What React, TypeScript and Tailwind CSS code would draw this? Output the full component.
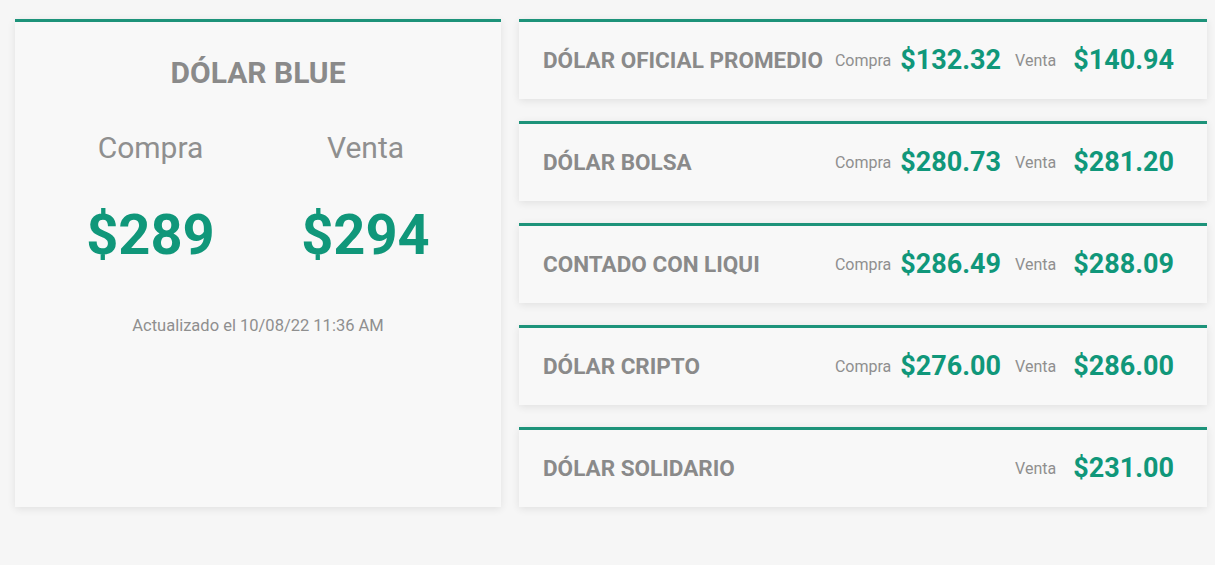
const rates = [
  { name: 'DÓLAR OFICIAL PROMEDIO', compra: '$132.32', venta: '$140.94' },
  { name: 'DÓLAR BOLSA', compra: '$280.73', venta: '$281.20' },
  { name: 'CONTADO CON LIQUI', compra: '$286.49', venta: '$288.09' },
  { name: 'DÓLAR CRIPTO', compra: '$276.00', venta: '$286.00' },
  { name: 'DÓLAR SOLIDARIO', compra: null, venta: '$231.00' },
];

const card =
  'bg-[#f8f8f8] border-t-[3px] border-[#1d937a] shadow-[0_2px_8px_rgba(0,0,0,0.09)]';

function RateRow({ name, compra, venta }: { name: string; compra: string | null; venta: string }) {
  return (
    <div className={`${card} h-[80px] flex items-center pl-[24px] pr-[33px]`}>
      <h3 className="text-[22.5px] font-bold text-[#8a8a8a] leading-none">{name}</h3>
      <div className="ml-auto flex items-center">
        {compra && (
          <>
            <span className="text-[16px] text-[#8f8f8f]">Compra</span>
            <span className="ml-[9px] text-[27px] font-bold text-[#10977a]">{compra}</span>
          </>
        )}
        <span className="ml-[14px] text-[16px] text-[#8f8f8f]">Venta</span>
        <span className="ml-[17px] text-[27px] font-bold text-[#10977a]">{venta}</span>
      </div>
    </div>
  );
}

export default function App() {
  return (
    <div
      className="min-h-screen bg-[#f6f6f6] pl-[15px] pr-[8px] pt-[19px]"
      style={{ fontFamily: 'Roboto, "Liberation Sans", sans-serif' }}
    >
      <div className="flex gap-[18px]">
        <div className={`${card} w-[486px] h-[488px] shrink-0 flex flex-col items-center pt-[33px]`}>
          <h2 className="text-[30px] leading-[36px] font-bold text-[#8a8a8a]">DÓLAR BLUE</h2>
          <div className="grid grid-cols-2 w-[430px] mt-[39px] text-center">
            <div className="text-[30px] leading-[36px] text-[#8f8f8f]">Compra</div>
            <div className="text-[30px] leading-[36px] text-[#8f8f8f]">Venta</div>
            <div className="mt-[37px] text-[56px] leading-[64px] font-bold text-[#10977a]">$289</div>
            <div className="mt-[37px] text-[56px] leading-[64px] font-bold text-[#10977a]">$294</div>
          </div>
          <p className="mt-[49px] text-[16.5px] leading-[20px] text-[#8f8f8f]">
            Actualizado el 10/08/22 11:36 AM
          </p>
        </div>
        <div className="flex-1 flex flex-col gap-[22px]">
          {rates.map((r) => (
            <RateRow key={r.name} {...r} />
          ))}
        </div>
      </div>
    </div>
  );
}
